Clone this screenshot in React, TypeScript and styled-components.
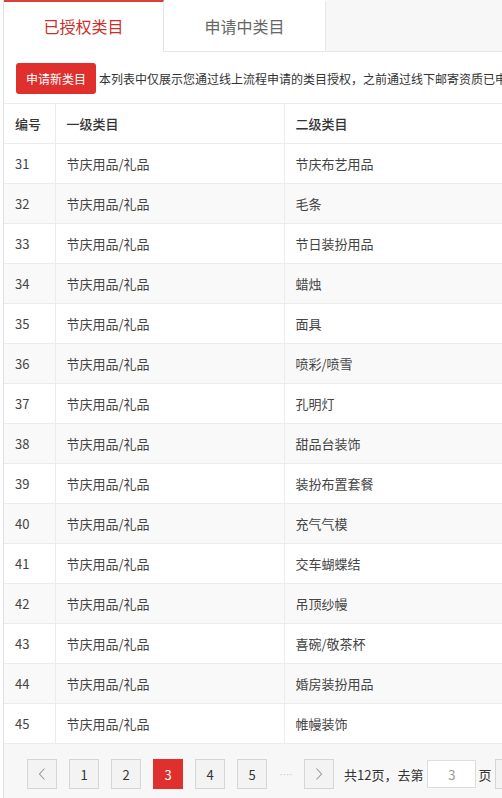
import React from 'react';
import styled, { createGlobalStyle } from 'styled-components';

const GlobalStyle = createGlobalStyle`
  html, body {
    margin: 0;
    padding: 0;
    background: #fff;
    overflow: hidden;
  }
  body {
    font-family: "Noto Sans CJK SC", "Noto Sans", "Liberation Sans", sans-serif;
    color: #333;
  }
`;

const rows = [
  { id: 31, second: '节庆布艺用品' },
  { id: 32, second: '毛条' },
  { id: 33, second: '节日装扮用品' },
  { id: 34, second: '蜡烛' },
  { id: 35, second: '面具' },
  { id: 36, second: '喷彩/喷雪' },
  { id: 37, second: '孔明灯' },
  { id: 38, second: '甜品台装饰' },
  { id: 39, second: '装扮布置套餐' },
  { id: 40, second: '充气气模' },
  { id: 41, second: '交车蝴蝶结' },
  { id: 42, second: '吊顶纱幔' },
  { id: 43, second: '喜碗/敬茶杯' },
  { id: 44, second: '婚房装扮用品' },
  { id: 45, second: '帷幔装饰' },
];

const App = () => {
  return (
    <>
      <GlobalStyle />
      <Page>
        <TabBar>
          <Tab active>已授权类目</Tab>
          <Tab>申请中类目</Tab>
          <TabFill />
        </TabBar>
        <Panel>
          <Toolbar>
            <ApplyButton>申请新类目</ApplyButton>
            <Notice>本列表中仅展示您通过线上流程申请的类目授权，之前通过线下邮寄资质已申请的类目不在此列表中展示</Notice>
          </Toolbar>
          <Table>
            <colgroup>
              <col style={{ width: 51 }} />
              <col style={{ width: 229 }} />
              <col />
            </colgroup>
            <thead>
              <tr>
                <Th>编号</Th>
                <Th>一级类目</Th>
                <Th>二级类目</Th>
              </tr>
            </thead>
            <tbody>
              {rows.map((r, i) => (
                <Row key={r.id} striped={i % 2 === 1}>
                  <Td>{r.id}</Td>
                  <Td>节庆用品/礼品</Td>
                  <Td>{r.second}</Td>
                </Row>
              ))}
            </tbody>
          </Table>
          <Pager>
            <PageBtn>
              <svg width="10" height="14" viewBox="0 0 10 14">
                <path d="M7.5 1.5 L2.5 7 L7.5 12.5" fill="none" stroke="#999" strokeWidth="1.1" />
              </svg>
            </PageBtn>
            <PageBtn>1</PageBtn>
            <PageBtn>2</PageBtn>
            <PageBtn current>3</PageBtn>
            <PageBtn>4</PageBtn>
            <PageBtn>5</PageBtn>
            <Ellipsis>····</Ellipsis>
            <PageBtn>
              <svg width="10" height="14" viewBox="0 0 10 14">
                <path d="M2.5 1.5 L7.5 7 L2.5 12.5" fill="none" stroke="#999" strokeWidth="1.1" />
              </svg>
            </PageBtn>
            <PagerText>共12页，去第</PagerText>
            <JumpInput defaultValue="3" />
            <PagerText>页</PagerText>
            <PageBtn wide>确定</PageBtn>
          </Pager>
        </Panel>
      </Page>
    </>
  );
};
export default App;

const Page = styled.div`
  width: 760px;
  margin-left: 3px;
  border-left: 1px solid #e2e2e2;
`;

const TabBar = styled.div`
  display: flex;
  height: 52px;
`;

const Tab = styled.div<{ active?: boolean }>`
  width: 160px;
  box-sizing: border-box;
  display: flex;
  align-items: center;
  justify-content: center;
  font-size: 16px;
  background: #fff;
  color: ${(p) => (p.active ? '#c9302c' : '#666')};
  border-top: 2px solid ${(p) => (p.active ? '#d9403a' : 'transparent')};
  border-right: 1px solid #e6e6e6;
  border-bottom: 1px solid ${(p) => (p.active ? 'transparent' : '#e6e6e6')};
  padding-bottom: 2px;
  &:nth-child(2) {
    width: 162px;
  }
`;

const TabFill = styled.div`
  flex: 1;
  background: #f7f7f7;
  border-bottom: 1px solid #e6e6e6;
`;

const Panel = styled.div`
  background: #fff;
`;

const Toolbar = styled.div`
  display: flex;
  align-items: center;
  gap: 3px;
  padding: 11px 0 9px 12px;
  white-space: nowrap;
`;

const ApplyButton = styled.button`
  height: 31px;
  padding: 0 10px;
  border: 0;
  border-radius: 3px;
  background: #e0302e;
  color: #fff;
  font-family: inherit;
  font-size: 12px;
  cursor: pointer;
  flex-shrink: 0;
`;

const Notice = styled.span`
  font-size: 12px;
  color: #333;
`;

const Table = styled.table`
  width: 100%;
  border-collapse: collapse;
  table-layout: fixed;
  font-size: 13px;
`;

const Th = styled.th`
  height: 39px;
  padding: 0 0 0 11px;
  text-align: left;
  font-weight: 500;
  color: #333;
  border-top: 1px solid #ececec;
  border-bottom: 1px solid #ececec;
  & + & {
    border-left: 1px solid #ececec;
  }
`;

const Row = styled.tr<{ striped?: boolean }>`
  background: ${(p) => (p.striped ? '#f9f9f9' : '#fff')};
`;

const Td = styled.td`
  height: 39px;
  padding: 0 0 0 11px;
  color: #444;
  border-bottom: 1px solid #ececec;
  & + & {
    border-left: 1px solid #ececec;
  }
`;

const Pager = styled.div`
  display: flex;
  align-items: center;
  padding: 15px 0 14px 23px;
  background: #f7f7f7;
  font-size: 13px;
`;

const PageBtn = styled.div<{ current?: boolean; wide?: boolean }>`
  width: ${(p) => (p.wide ? '44px' : '30px')};
  height: 30px;
  box-sizing: border-box;
  display: flex;
  align-items: center;
  justify-content: center;
  margin-right: 12px;
  border: 1px solid ${(p) => (p.current ? '#e0302e' : '#d6d6d6')};
  background: ${(p) => (p.current ? '#e0302e' : '#f3f3f3')};
  color: ${(p) => (p.current ? '#fff' : '#333')};
  font-size: 13px;
  flex-shrink: 0;
`;

const Ellipsis = styled.span`
  width: 18px;
  margin: 0 9px 0 -2px;
  color: #c4c4c4;
  font-family: "Liberation Sans", sans-serif;
  font-size: 10px;
  letter-spacing: 0;
  text-align: center;
  white-space: nowrap;
`;

const PagerText = styled.span`
  font-size: 13px;
  color: #333;
  margin: 0 4px 0 -2px;
  white-space: nowrap;
`;

const JumpInput = styled.input`
  width: 49px;
  height: 28px;
  box-sizing: border-box;
  border: 1px solid #ddd;
  background: #fff;
  text-align: center;
  color: #999;
  font-size: 13px;
  font-family: inherit;
  margin-right: 4px;
  outline: none;
`;
